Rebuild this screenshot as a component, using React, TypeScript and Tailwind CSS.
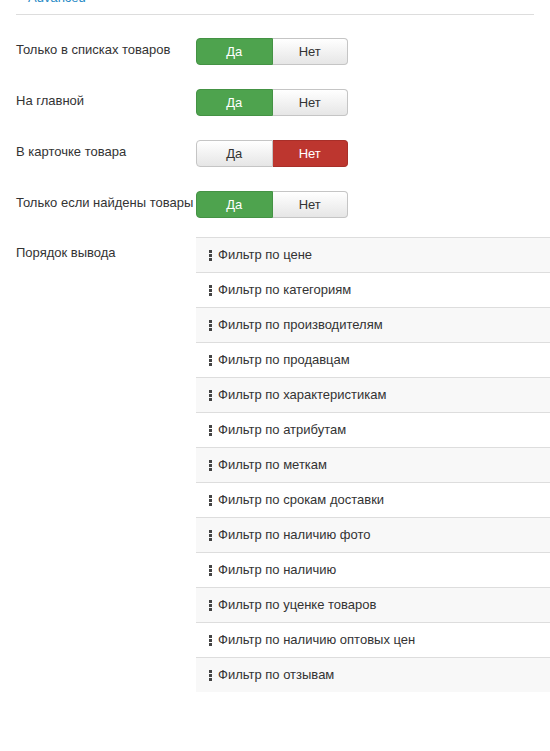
const rows = [
  { label: "Только в списках товаров", yes: true },
  { label: "На главной", yes: true },
  { label: "В карточке товара", yes: false },
  { label: "Только если найдены товары", yes: true },
];

const filters = [
  "Фильтр по цене",
  "Фильтр по категориям",
  "Фильтр по производителям",
  "Фильтр по продавцам",
  "Фильтр по характеристикам",
  "Фильтр по атрибутам",
  "Фильтр по меткам",
  "Фильтр по срокам доставки",
  "Фильтр по наличию фото",
  "Фильтр по наличию",
  "Фильтр по уценке товаров",
  "Фильтр по наличию оптовых цен",
  "Фильтр по отзывам",
];

function Toggle({ yes }: { yes: boolean }) {
  const off = "bg-gradient-to-b from-white to-[#e6e6e6] text-[#333] border-[#c5c5c5]";
  return (
    <div className="flex w-[152px] h-[27px] text-[13px]">
      <div
        className={
          "flex-1 flex items-center justify-center rounded-l-[4px] border " +
          (yes ? "bg-[#4ea34e] text-white border-[#449244]" : off)
        }
      >
        Да
      </div>
      <div
        className={
          "flex-1 flex items-center justify-center rounded-r-[4px] border border-l-0 " +
          (yes ? off : "bg-[#bd362f] text-white border-[#a82f29]")
        }
      >
        Нет
      </div>
    </div>
  );
}

function Handle() {
  return (
    <span className="flex flex-col gap-[1px] w-[3px] mr-[6px]">
      <span className="block w-[3px] h-[3px] bg-[#444]" />
      <span className="block w-[3px] h-[3px] bg-[#444]" />
      <span className="block w-[3px] h-[3px] bg-[#444]" />
    </span>
  );
}

export default function App() {
  return (
    <div
      className="bg-white w-[550px] h-[751px] overflow-hidden text-[13px] text-[#333]"
      style={{ fontFamily: "'Liberation Sans', Arial, sans-serif" }}
    >
      <div className="px-4">
        <div className="border-b border-[#ddd] pl-3 h-[15px] flex items-end">
          <span className="text-[#2a8bc6] text-[13px] leading-none mb-[10px]">Advanced</span>
        </div>
      </div>

      <div className="pl-4 pt-[23px]">
        {rows.map((r, i) => (
          <div key={r.label} className={"flex " + (i === rows.length - 1 ? "h-[46px]" : "h-[51px]")}>
            <div className="w-[180px] pt-[2px]">{r.label}</div>
            <Toggle yes={r.yes} />
          </div>
        ))}

        <div className="flex">
          <div className="w-[180px] pt-[6px]">Порядок вывода</div>
          <ul className="flex-1">
            {filters.map((f, i) => (
              <li
                key={f}
                className={
                  "h-[35px] flex items-center pl-[13px] border-t border-[#ddd] " +
                  (i % 2 === 0 ? "bg-[#f8f8f8]" : "bg-white")
                }
              >
                <Handle />
                {f}
              </li>
            ))}
          </ul>
        </div>
      </div>
    </div>
  );
}
